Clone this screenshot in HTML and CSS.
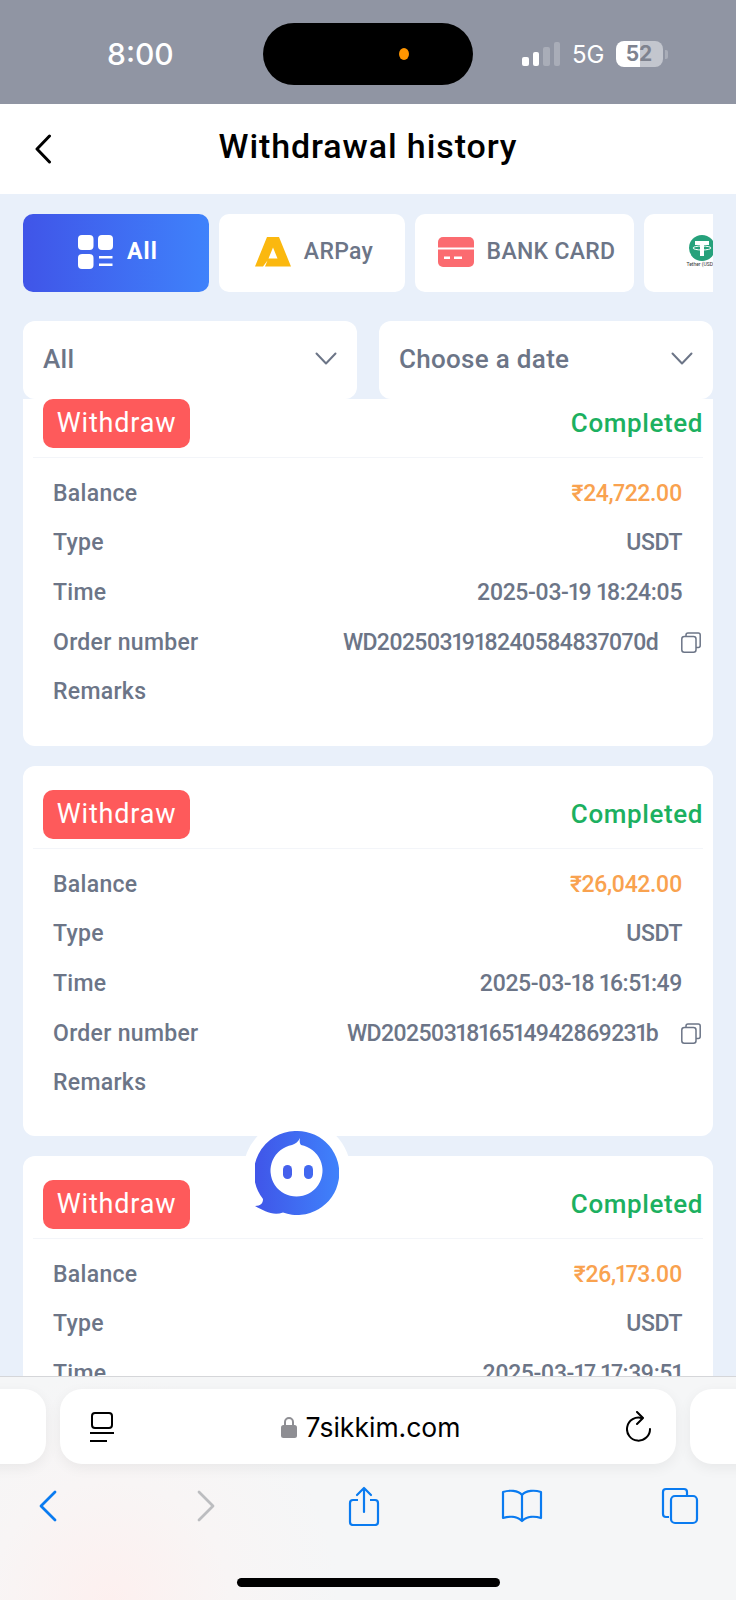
FILE: index.html
```html
<!DOCTYPE html>
<html>
<head>
  <link rel="stylesheet" href="styles.css">
</head>
<body>
  <div class="phone">
    <div class="status-bar">
      <div class="status-time">8:00</div>
      <div class="island"><span class="island-dot"></span></div>
      <div class="status-right">
        <div class="signal">
          <span class="bar bar-1"></span>
          <span class="bar bar-2"></span>
          <span class="bar bar-3"></span>
          <span class="bar bar-4"></span>
        </div>
        <div class="network">5G</div>
        <div class="battery"><div class="battery-body">52</div><span class="battery-cap"></span></div>
      </div>
    </div>

    <div class="nav-bar">
      <svg class="nav-back" viewBox="0 0 18 30" width="18" height="30"><path d="M15.500 2 3 15l12.500 13" fill="none" stroke="#000" stroke-width="3" stroke-linecap="round" stroke-linejoin="round"/></svg>
      <div class="nav-title">Withdrawal history</div>
    </div>

    <div class="content">
      <div class="tabs">
        <div class="tab tab-active">
          <svg viewBox="0 0 36 34" width="36" height="34"><rect x="0" y="0" width="15.500" height="15" rx="4" fill="#fff"/><rect x="20" y="0" width="15" height="15" rx="4" fill="#fff"/><rect x="0" y="19" width="15.500" height="15" rx="4" fill="#fff"/><rect x="21" y="21" width="13.500" height="2.500" fill="#fff"/><rect x="21" y="28.500" width="13.500" height="2.500" fill="#fff"/></svg>
          <span>All</span>
        </div>
        <div class="tab">
          <svg viewBox="0 0 36 30" width="36" height="30"><path fill-rule="evenodd" d="M12 0H24L36 29.500H10L12.500 23.500 8 29.500H0ZM18 10.500 13.500 21.500H22.500Z" fill="#fbb80f"/></svg>
          <span>ARPay</span>
        </div>
        <div class="tab tab-wide">
          <svg viewBox="0 0 36 30" width="36" height="30"><path d="M5 0h26a5 5 0 0 1 5 5v5.500H0V5a5 5 0 0 1 5-5z" fill="#fb6b70"/><path d="M0 12.500h36V25a5 5 0 0 1-5 5H5a5 5 0 0 1-5-5z" fill="#fb6b70"/><rect x="6" y="19.500" width="6" height="2.500" fill="#fff"/><rect x="16" y="19.500" width="8" height="2.500" fill="#fff"/></svg>
          <span>BANK CARD</span>
        </div>
        <div class="tab tab-usdt">
          <div class="usdt-logo">
            <svg viewBox="0 0 26 26" width="26" height="26"><circle cx="13" cy="13" r="13" fill="#26a17b"/><path d="M6 6h14v4h-5v11h-4V10H6z" fill="#fff"/><ellipse cx="13" cy="13" rx="9" ry="2" fill="none" stroke="#fff" stroke-width="1"/></svg>
            <div class="usdt-name">Tether (USDT)</div>
          </div>
        </div>
      </div>

      <div class="filters">
        <div class="select">
          <span>All</span>
          <svg viewBox="0 0 22 13" width="22" height="13"><path d="M1.500 1.500 11 11.500l9.500-10" fill="none" stroke="#6c7587" stroke-width="2" stroke-linecap="round" stroke-linejoin="round"/></svg>
        </div>
        <div class="select">
          <span>Choose a date</span>
          <svg viewBox="0 0 22 13" width="22" height="13"><path d="M1.500 1.500 11 11.500l9.500-10" fill="none" stroke="#6c7587" stroke-width="2" stroke-linecap="round" stroke-linejoin="round"/></svg>
        </div>
      </div>

      <div class="list">
        <div class="card card-scrolled">
          <div class="card-head">
            <div class="badge">Withdraw</div>
            <div class="state">Completed</div>
          </div>
          <div class="row"><span>Balance</span><span class="value amount">₹24,722.00</span></div>
          <div class="row"><span>Type</span><span class="value">USDT</span></div>
          <div class="row"><span>Time</span><span class="value">2025-03-19 18:24:05</span></div>
          <div class="row"><span>Order number</span>
            <span class="value order">WD2025031918240584837070d
              <svg viewBox="0 0 20 21" width="20" height="21"><path d="M5 4.500V3a2 2 0 0 1 2-2h10.200a2 2 0 0 1 2 2v10.500a2 2 0 0 1-2 2H15" fill="none" stroke="#6c7587" stroke-width="1.500"/><rect x="0.800" y="4.500" width="14.200" height="15.700" rx="2.500" fill="none" stroke="#6c7587" stroke-width="1.500"/></svg>
            </span>
          </div>
          <div class="row"><span>Remarks</span></div>
        </div>

        <div class="card">
          <div class="card-head">
            <div class="badge">Withdraw</div>
            <div class="state">Completed</div>
          </div>
          <div class="row"><span>Balance</span><span class="value amount">₹26,042.00</span></div>
          <div class="row"><span>Type</span><span class="value">USDT</span></div>
          <div class="row"><span>Time</span><span class="value">2025-03-18 16:51:49</span></div>
          <div class="row"><span>Order number</span>
            <span class="value order">WD2025031816514942869231b
              <svg viewBox="0 0 20 21" width="20" height="21"><path d="M5 4.500V3a2 2 0 0 1 2-2h10.200a2 2 0 0 1 2 2v10.500a2 2 0 0 1-2 2H15" fill="none" stroke="#6c7587" stroke-width="1.500"/><rect x="0.800" y="4.500" width="14.200" height="15.700" rx="2.500" fill="none" stroke="#6c7587" stroke-width="1.500"/></svg>
            </span>
          </div>
          <div class="row"><span>Remarks</span></div>
        </div>

        <div class="card">
          <div class="card-head">
            <div class="badge">Withdraw</div>
            <div class="state">Completed</div>
          </div>
          <div class="row"><span>Balance</span><span class="value amount">₹26,173.00</span></div>
          <div class="row"><span>Type</span><span class="value">USDT</span></div>
          <div class="row"><span>Time</span><span class="value">2025-03-17 17:39:51</span></div>
        </div>
      </div>
    </div>

    <div class="browser">
      <div class="url-row">
        <div class="url-side url-side-left"></div>
        <div class="url-pill">
          <svg viewBox="0 0 26 30" width="26" height="30"><rect x="3" y="1" width="20" height="15" rx="3" fill="none" stroke="#000" stroke-width="2"/><path d="M1 21h24M1 29h17" stroke="#000" stroke-width="2.200" fill="none"/></svg>
          <div class="url-text">
            <svg viewBox="0 0 16 22" width="16" height="22"><path d="M4 10V6a4 4 0 0 1 8 0v4" fill="none" stroke="#8e8e93" stroke-width="2"/><rect x="0" y="9" width="16" height="13" rx="2.500" fill="#8e8e93"/></svg>
            <span>7sikkim.com</span>
          </div>
          <svg viewBox="0 0 26 32" width="26" height="32"><path d="M16 7.200A11.500 11.500 0 1 0 24 18" fill="none" stroke="#000" stroke-width="2" stroke-linecap="round"/><path d="M11 1l6 6-6 6" fill="none" stroke="#000" stroke-width="2" stroke-linecap="round" stroke-linejoin="round"/></svg>
        </div>
        <div class="url-side url-side-right"></div>
      </div>
      <div class="toolbar">
        <div class="tool"><svg viewBox="0 0 20 32" width="20" height="32"><path d="M17 2 3 16l14 14" fill="none" stroke="#0a7bf0" stroke-width="2.800" stroke-linecap="round" stroke-linejoin="round"/></svg></div>
        <div class="tool"><svg viewBox="0 0 20 32" width="20" height="32"><path d="M3 2l14 14L3 30" fill="none" stroke="#bcbdc0" stroke-width="2.800" stroke-linecap="round" stroke-linejoin="round"/></svg></div>
        <div class="tool"><svg viewBox="0 0 32 40" width="32" height="40"><path d="M10 14H5a3 3 0 0 0-3 3v19a3 3 0 0 0 3 3h22a3 3 0 0 0 3-3V17a3 3 0 0 0-3-3h-5" fill="none" stroke="#0a7bf0" stroke-width="2.200"/><path d="M16 26V2M9 9l7-7 7 7" fill="none" stroke="#0a7bf0" stroke-width="2.200" stroke-linecap="round" stroke-linejoin="round"/></svg></div>
        <div class="tool"><svg viewBox="0 0 42 34" width="42" height="34"><path d="M21 6C17 1 8 1 2 3v26c6-2 14-2 19 3 5-5 13-5 19-3V3c-6-2-15-2-19 3zM21 6v26" fill="none" stroke="#0a7bf0" stroke-width="2.200" stroke-linejoin="round"/></svg></div>
        <div class="tool"><svg viewBox="0 0 38 38" width="38" height="38"><path d="M8 30H5a3 3 0 0 1-3-3V5a3 3 0 0 1 3-3h18a3 3 0 0 1 3 3v3" fill="none" stroke="#0a7bf0" stroke-width="2.200"/><rect x="10" y="9" width="26" height="27" rx="4" fill="none" stroke="#0a7bf0" stroke-width="2.200"/></svg></div>
      </div>
      <div class="home-indicator"></div>
    </div>

    <div class="chat-button">
      <svg viewBox="0 0 84 84" width="84" height="84">
        <defs>
          <linearGradient id="chatBlue" x1="0" y1="0" x2="1" y2="0">
            <stop offset="0" stop-color="#4055e8"/>
            <stop offset="1" stop-color="#3f82fb"/>
          </linearGradient>
        </defs>
        <path d="M42 0a42 42 0 1 1-14 81.500C18 85 9 80 0 75c6 0 8-3 8-7A42 42 0 0 1 42 0z" fill="url(#chatBlue)"/>
        <path d="M45 7c-.5 3-.5 5 1 7a26 26 0 1 1-9 0c3-1 6-3 8-7z" fill="#fff"/>
        <rect x="28" y="34" width="9" height="14" rx="4.500" fill="#4560ec"/>
        <rect x="49" y="34" width="9" height="14" rx="4.500" fill="#4168f0"/>
      </svg>
    </div>
  </div>
</body>
</html>
```

FILE: styles.css
```css
* {
  box-sizing: border-box;
}

body {
  margin: 0;
  font-family: Roboto, "Liberation Sans", sans-serif;
  background-color: #e9f0fa;
}

.phone {
  position: relative;
  display: flex;
  flex-direction: column;
  width: 736px;
  height: 1600px;
  overflow: hidden;
}

/* status bar */
.status-bar {
  display: flex;
  align-items: center;
  flex-shrink: 0;
  height: 104px;
  padding: 23px 0 19px 107px;
  background-color: #9095a3;
  color: #fff;
}

.status-time {
  width: 65px;
  font-family: Inter, sans-serif;
  font-size: 30px;
  font-weight: 500;
  white-space: nowrap;
}

.island {
  display: flex;
  align-items: center;
  justify-content: flex-end;
  width: 210px;
  height: 62px;
  margin-left: 91px;
  padding-right: 64px;
  border-radius: 31px;
  background-color: #000;
}

.island-dot {
  width: 10px;
  height: 12px;
  border-radius: 50%;
  background-color: #ff9500;
}

.status-right {
  display: flex;
  align-items: center;
  margin-left: 49px;
}

.signal {
  display: flex;
  align-items: flex-end;
  gap: 4px;
  height: 24px;
}

.bar {
  width: 6.500px;
  border-radius: 2px;
  background-color: #fff;
}

.bar-1 { height: 9px; }
.bar-2 { height: 14px; }
.bar-3 { height: 19px; background-color: #a9adb8; }
.bar-4 { height: 24px; background-color: #a9adb8; }

.network {
  margin-left: 12px;
  font-family: Inter, sans-serif;
  font-size: 24px;
}

.battery {
  display: flex;
  align-items: center;
  margin-left: 11px;
}

.battery-body {
  width: 47px;
  height: 26px;
  border-radius: 8px;
  background: linear-gradient(to right, #fff 52%, #c3c6ce 52%);
  color: #7f838f;
  font-family: Inter, sans-serif;
  font-size: 21px;
  font-weight: 700;
  line-height: 26px;
  text-align: center;
}

.battery-cap {
  width: 3px;
  height: 9px;
  margin-left: 2px;
  border-radius: 0 2px 2px 0;
  background-color: #a9adb8;
}

/* nav */
.nav-bar {
  position: relative;
  flex-shrink: 0;
  display: flex;
  align-items: center;
  justify-content: center;
  height: 90px;
  padding-bottom: 6px;
  background-color: #fff;
}

.nav-back {
  position: absolute;
  left: 34px;
  top: 30px;
}

.nav-title {
  font-size: 34px;
  font-weight: 500;
  letter-spacing: 0.900px;
  color: #000;
}

/* content */
.content {
  display: flex;
  flex-direction: column;
  flex: 1;
  min-height: 0;
  padding: 20px 23px 0;
}

.tabs {
  display: flex;
  flex-shrink: 0;
  gap: 10px;
  height: 78px;
  overflow: hidden;
}

.tab {
  display: flex;
  align-items: center;
  justify-content: center;
  flex-shrink: 0;
  gap: 13px;
  width: 186px;
  padding: 0 0 3px 4px;
  border-radius: 10px;
  background-color: #fff;
  color: #6c7587;
  font-size: 23px;
  font-weight: 500;
  letter-spacing: 0.300px;
  white-space: nowrap;
}

.tab-active {
  background: linear-gradient(to right, #4055e8, #3f82fb);
  color: #fff;
  font-weight: 700;
  letter-spacing: 1.200px;
}

.tab-wide {
  width: 219px;
}

.tab-usdt {
  justify-content: flex-start;
  width: 100px;
  padding-left: 45px;
}

.usdt-logo {
  display: flex;
  flex-direction: column;
  align-items: center;
  width: 26px;
}

.usdt-logo svg {
  flex-shrink: 0;
}

.usdt-name {
  font-size: 5px;
  font-weight: 400;
  line-height: 7px;
  letter-spacing: 0;
  color: #333;
}

.filters {
  display: flex;
  flex-shrink: 0;
  gap: 22px;
  height: 78px;
  margin-top: 29px;
}

.select {
  display: flex;
  align-items: center;
  justify-content: space-between;
  flex: 1;
  padding: 0 20px 3px;
  border-radius: 12px;
  background-color: #fff;
  color: #6c7587;
  font-size: 26px;
  font-weight: 500;
  letter-spacing: 0.300px;
}

/* record list, scrolled so the first card starts behind the filters */
.list {
  flex: 1;
  min-height: 0;
  overflow: hidden;
}

.card {
  height: 370px;
  margin-bottom: 20px;
  padding: 24px 10px 0;
  border-radius: 12px;
  background-color: #fff;
  color: #6c7587;
  font-size: 23px;
  font-weight: 500;
  letter-spacing: 0.300px;
}

.card-scrolled {
  height: 347px;
  padding-top: 0;
  border-radius: 0 0 12px 12px;
}

.card-head {
  display: flex;
  align-items: center;
  justify-content: space-between;
  height: 59px;
  padding: 0 0 10px 10px;
  border-bottom: 1px solid #f3f5f9;
}

.badge {
  width: 147px;
  height: 49px;
  border-radius: 10px;
  background-color: #fe5a5b;
  color: #fff;
  font-size: 27px;
  font-weight: 400;
  letter-spacing: 0.800px;
  line-height: 48px;
  text-align: center;
}

.state {
  margin-bottom: 1px;
  color: #1cb060;
  font-size: 26px;
  font-weight: 500;
  letter-spacing: 0.600px;
}

.row {
  display: flex;
  align-items: center;
  justify-content: space-between;
  height: 49.600px;
  padding: 0 21px 0 20px;
  white-space: nowrap;
}

.card-head + .row {
  margin-top: 10.500px;
}

.value {
  font-variant-numeric: proportional-nums;
  letter-spacing: -0.450px;
}

.amount {
  color: #f9a24f;
}

.order {
  display: flex;
  align-items: center;
  gap: 23px;
  margin-right: -19px;
  letter-spacing: -0.700px;
}

/* floating chat */
.chat-button {
  position: absolute;
  left: 243px;
  top: 1119px;
  display: flex;
  align-items: center;
  justify-content: center;
  width: 108px;
  height: 108px;
  border-radius: 50%;
  background-color: #fff;
}

/* safari chrome */
.browser {
  position: relative;
  flex-shrink: 0;
  height: 224px;
  border-top: 1px solid #d5d6d9;
  background: radial-gradient(circle at 110px 224px, #fdf0ef 0, #f8f5f5 120px, transparent 230px), #f5f6f7;
}

.url-row {
  display: flex;
  gap: 14px;
  height: 75px;
  margin: 12px 0 0 -100px;
}

.url-side {
  flex-shrink: 0;
  width: 146px;
  border-radius: 22px;
  background-color: #fff;
  box-shadow: 0 4px 14px rgba(0, 0, 0, 0.06);
}

.url-pill {
  display: flex;
  align-items: center;
  justify-content: space-between;
  flex-shrink: 0;
  width: 616px;
  padding: 0 24px 0 29px;
  border-radius: 22px;
  background-color: #fff;
  box-shadow: 0 4px 14px rgba(0, 0, 0, 0.06);
}

.url-text {
  display: flex;
  align-items: center;
  gap: 9px;
  color: #000;
  font-family: Inter, sans-serif;
  font-size: 26.500px;
}

.toolbar {
  display: flex;
  align-items: center;
  height: 42px;
  margin: 21px 0 0 -31px;
}

.tool {
  display: flex;
  align-items: center;
  justify-content: center;
  flex-shrink: 0;
  width: 158px;
}

.home-indicator {
  position: absolute;
  left: 237px;
  bottom: 13px;
  width: 263px;
  height: 9px;
  border-radius: 5px;
  background-color: #000;
}
```
